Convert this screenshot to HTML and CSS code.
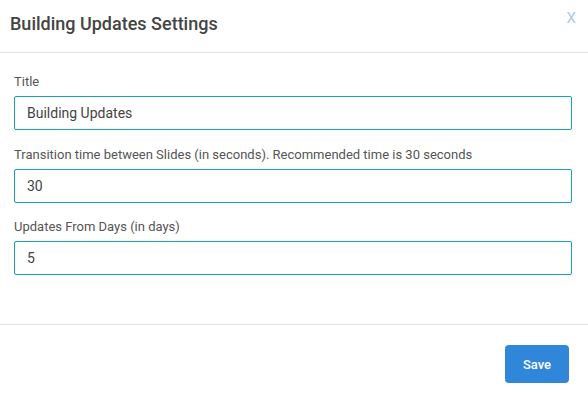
FILE: index.html
```html
<!DOCTYPE html>
<html>
<head>
<meta charset="utf-8">
<link rel="stylesheet" href="styles.css">
</head>
<body>
<div class="modal">
  <div class="modal-header">
    <h2 class="modal-title">Building Updates Settings</h2>
    <span class="close">X</span>
  </div>
  <div class="modal-body">
    <div class="form-group">
      <label class="form-label">Title</label>
      <input class="form-input" type="text" value="Building Updates">
    </div>
    <div class="form-group">
      <label class="form-label">Transition time between Slides (in seconds). Recommended time is 30 seconds</label>
      <input class="form-input" type="text" value="30">
    </div>
    <div class="form-group">
      <label class="form-label">Updates From Days (in days)</label>
      <input class="form-input" type="text" value="5">
    </div>
  </div>
  <div class="modal-footer">
    <button class="btn-save">Save</button>
  </div>
</div>
</body>
</html>
```

FILE: styles.css
```css
* { box-sizing: border-box; }
html, body { margin: 0; padding: 0; background: #fff; }
body { font-family: Roboto, "Noto Sans", sans-serif; color: #444; }
.modal { width: 588px; height: 403px; display: flex; flex-direction: column; }
.modal-header {
  height: 53px;
  border-bottom: 1px solid #e2e2e2;
  display: flex;
  align-items: flex-start;
  justify-content: space-between;
  padding: 0 12px 0 10px;
}
.modal-title {
  margin: 0;
  padding-top: 12px;
  font-size: 18px;
  line-height: 24px;
  font-weight: 500;
  color: #444;
}
.close {
  padding-top: 9px;
  font-size: 15px;
  line-height: 18px;
  color: #a9c9f1;
}
.modal-body {
  flex: 1;
  padding: 20px 16px 0 14px;
  border-bottom: 1px solid #e2e2e2;
}
.form-group { margin-bottom: 15.5px; }
.form-label {
  display: block;
  font-size: 13px;
  line-height: 18px;
  color: #555;
  margin-bottom: 5px;
}
.form-input {
  display: block;
  width: 100%;
  height: 34px;
  border: 1px solid #1aa0b6;
  border-radius: 2px;
  padding: 0 12px;
  font-family: Roboto, "Noto Sans", sans-serif;
  font-size: 14px;
  color: #444;
  background: #fff;
  outline: none;
}
.modal-footer {
  height: 78px;
  display: flex;
  justify-content: flex-end;
  align-items: center;
  padding-right: 19px;
}
.btn-save {
  width: 64px;
  height: 38px;
  border: none;
  border-radius: 4px;
  background: #3087da;
  color: #fff;
  font-family: Roboto, "Noto Sans", sans-serif;
  font-size: 13px;
  font-weight: 500;
}
```
